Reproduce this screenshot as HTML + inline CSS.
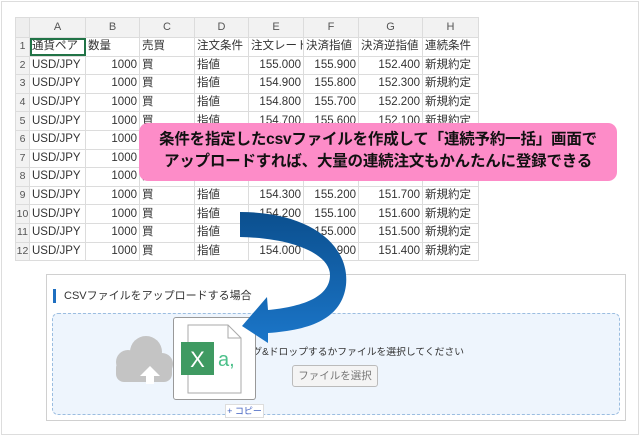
<!DOCTYPE html><html><head><meta charset="utf-8"><style>
body{margin:0;width:640px;height:436px;background:#fff;position:relative;overflow:hidden;font-family:"Liberation Sans","Noto Sans CJK JP",sans-serif}
.frame{position:absolute;left:1px;top:1px;width:636px;height:432px;border:1px solid #ddd}
table{position:absolute;left:15px;top:17px;border-collapse:collapse;font-size:11.5px;color:#333;table-layout:fixed;width:463px}
td{border:1px solid #dcdcdc;height:17.6px;padding:0 2px;white-space:nowrap;overflow:hidden;line-height:17px}
tr.h td{background:#f2f2f2;color:#555;text-align:center;height:19px;font-size:11px}
td.n{background:#f2f2f2;color:#555;text-align:center;font-size:10.5px;padding:0}
td.r{text-align:right}
td.sel{outline:2px solid #217346;outline-offset:-2px}
.call{position:absolute;left:139px;top:123px;width:478px;height:58px;background:#fd8cc8;border-radius:9px;text-align:center;font-weight:bold;font-size:15.5px;line-height:22px;color:#111;padding-top:6px;box-sizing:border-box;letter-spacing:-0.2px}
.panel{position:absolute;left:46px;top:274px;width:580px;height:147px;border:1px solid #d0d0d0;background:#fff;box-sizing:border-box}
.title{position:absolute;left:6px;top:14px;font-size:11px;color:#333;border-left:3px solid #1f6fc0;padding-left:8px;line-height:14px}
.drop{position:absolute;left:5px;top:38px;width:568px;height:102px;background:#eef5fd;border:1px dashed #9bbde0;border-radius:6px;box-sizing:border-box}
.txt{position:absolute;left:223px;top:344px;font-size:9.8px;color:#333}
.btn{position:absolute;left:292px;top:365px;width:86px;height:22px;border:1px solid #bbb;border-radius:3px;background:#f4f4f4;font-size:10.5px;color:#777;text-align:center;line-height:21px;box-sizing:border-box}
.card{position:absolute;left:173px;top:317px;width:83px;height:83px;background:#fff;border:1px solid #999;border-radius:3px;box-sizing:border-box}
.badge{position:absolute;left:225px;top:404px;width:39px;height:14px;background:#fff;border:1px solid #ddd;font-size:9px;color:#4060c0;text-align:center;line-height:13px;box-sizing:border-box}
</style></head><body>
<div class="frame"></div>
<table>
<colgroup><col style="width:14px"><col style="width:56px"><col style="width:54px"><col style="width:55px"><col style="width:54px"><col style="width:55px"><col style="width:55px"><col style="width:64px"><col style="width:56px"></colgroup>
<tr class="h"><td style="background:#eee"></td><td>A</td><td>B</td><td>C</td><td>D</td><td>E</td><td>F</td><td>G</td><td>H</td></tr>
<tr><td class="n">1</td><td class="sel">通貨ペア</td><td>数量</td><td>売買</td><td>注文条件</td><td>注文レート</td><td>決済指値</td><td>決済逆指値</td><td>連続条件</td></tr>
<tr><td class="n">2</td><td>USD/JPY</td><td class="r">1000</td><td>買</td><td>指値</td><td class="r">155.000</td><td class="r">155.900</td><td class="r">152.400</td><td>新規約定</td></tr>
<tr><td class="n">3</td><td>USD/JPY</td><td class="r">1000</td><td>買</td><td>指値</td><td class="r">154.900</td><td class="r">155.800</td><td class="r">152.300</td><td>新規約定</td></tr>
<tr><td class="n">4</td><td>USD/JPY</td><td class="r">1000</td><td>買</td><td>指値</td><td class="r">154.800</td><td class="r">155.700</td><td class="r">152.200</td><td>新規約定</td></tr>
<tr><td class="n">5</td><td>USD/JPY</td><td class="r">1000</td><td>買</td><td>指値</td><td class="r">154.700</td><td class="r">155.600</td><td class="r">152.100</td><td>新規約定</td></tr>
<tr><td class="n">6</td><td>USD/JPY</td><td class="r">1000</td><td>買</td><td>指値</td><td class="r">154.600</td><td class="r">155.500</td><td class="r">152.000</td><td>新規約定</td></tr>
<tr><td class="n">7</td><td>USD/JPY</td><td class="r">1000</td><td>買</td><td>指値</td><td class="r">154.500</td><td class="r">155.400</td><td class="r">151.900</td><td>新規約定</td></tr>
<tr><td class="n">8</td><td>USD/JPY</td><td class="r">1000</td><td>買</td><td>指値</td><td class="r">154.400</td><td class="r">155.300</td><td class="r">151.800</td><td>新規約定</td></tr>
<tr><td class="n">9</td><td>USD/JPY</td><td class="r">1000</td><td>買</td><td>指値</td><td class="r">154.300</td><td class="r">155.200</td><td class="r">151.700</td><td>新規約定</td></tr>
<tr><td class="n">10</td><td>USD/JPY</td><td class="r">1000</td><td>買</td><td>指値</td><td class="r">154.200</td><td class="r">155.100</td><td class="r">151.600</td><td>新規約定</td></tr>
<tr><td class="n">11</td><td>USD/JPY</td><td class="r">1000</td><td>買</td><td>指値</td><td class="r">154.100</td><td class="r">155.000</td><td class="r">151.500</td><td>新規約定</td></tr>
<tr><td class="n">12</td><td>USD/JPY</td><td class="r">1000</td><td>買</td><td>指値</td><td class="r">154.000</td><td class="r">154.900</td><td class="r">151.400</td><td>新規約定</td></tr>
</table>
<div class="call">条件を指定したcsvファイルを作成して「連続予約一括」画面で<br>アップロードすれば、大量の連続注文もかんたんに登録できる</div>
<div class="panel"><div class="title">CSVファイルをアップロードする場合</div><div class="drop"></div></div>
<svg style="position:absolute;left:0;top:0" width="640" height="436">
<g fill="#c4c4c4"><circle cx="128" cy="362" r="12"/><circle cx="146" cy="352" r="16"/><circle cx="162" cy="364" r="11"/><rect x="116" y="360" width="56" height="22" rx="8"/></g>
<path d="M150 366 L140 376 H146 V384 H154 V376 H160Z" fill="#fff"/>
</svg>
<div class="txt">ドラッグ&amp;ドロップするかファイルを選択してください</div>
<div class="btn">ファイルを選択</div>
<div class="card"><svg width="83" height="83" style="position:absolute;left:-1px;top:-1px">
<path d="M15 8 H55 L68 21 V76 H15Z" fill="#fff" stroke="#aaa"/><path d="M55 8 V21 H68" fill="none" stroke="#aaa"/>
<rect x="8" y="25" width="33" height="33" fill="#3f9a62"/>
<text x="24.5" y="50" font-size="22" fill="#fff" text-anchor="middle" font-family="Liberation Sans">X</text>
<text x="45" y="49" font-size="20" fill="#4cc08a" font-family="Liberation Sans">a,</text>
</svg></div>
<div class="badge">+ コピー</div>
<svg style="position:absolute;left:0;top:0" width="640" height="436">
<defs><linearGradient id="g" x1="0" y1="0" x2="0" y2="1"><stop offset="0" stop-color="#0b4f8e"/><stop offset="1" stop-color="#1b76c9"/></linearGradient></defs>
<path d="M240 212 C310 212 350 245 346 285 C342 318 312 330 268 333 L268 343 L242 326 L267 297 L268 310 C300 307 330 298 330 275 C330 255 295 238 240 237Z" fill="url(#g)"/>
</svg>
</body></html>
